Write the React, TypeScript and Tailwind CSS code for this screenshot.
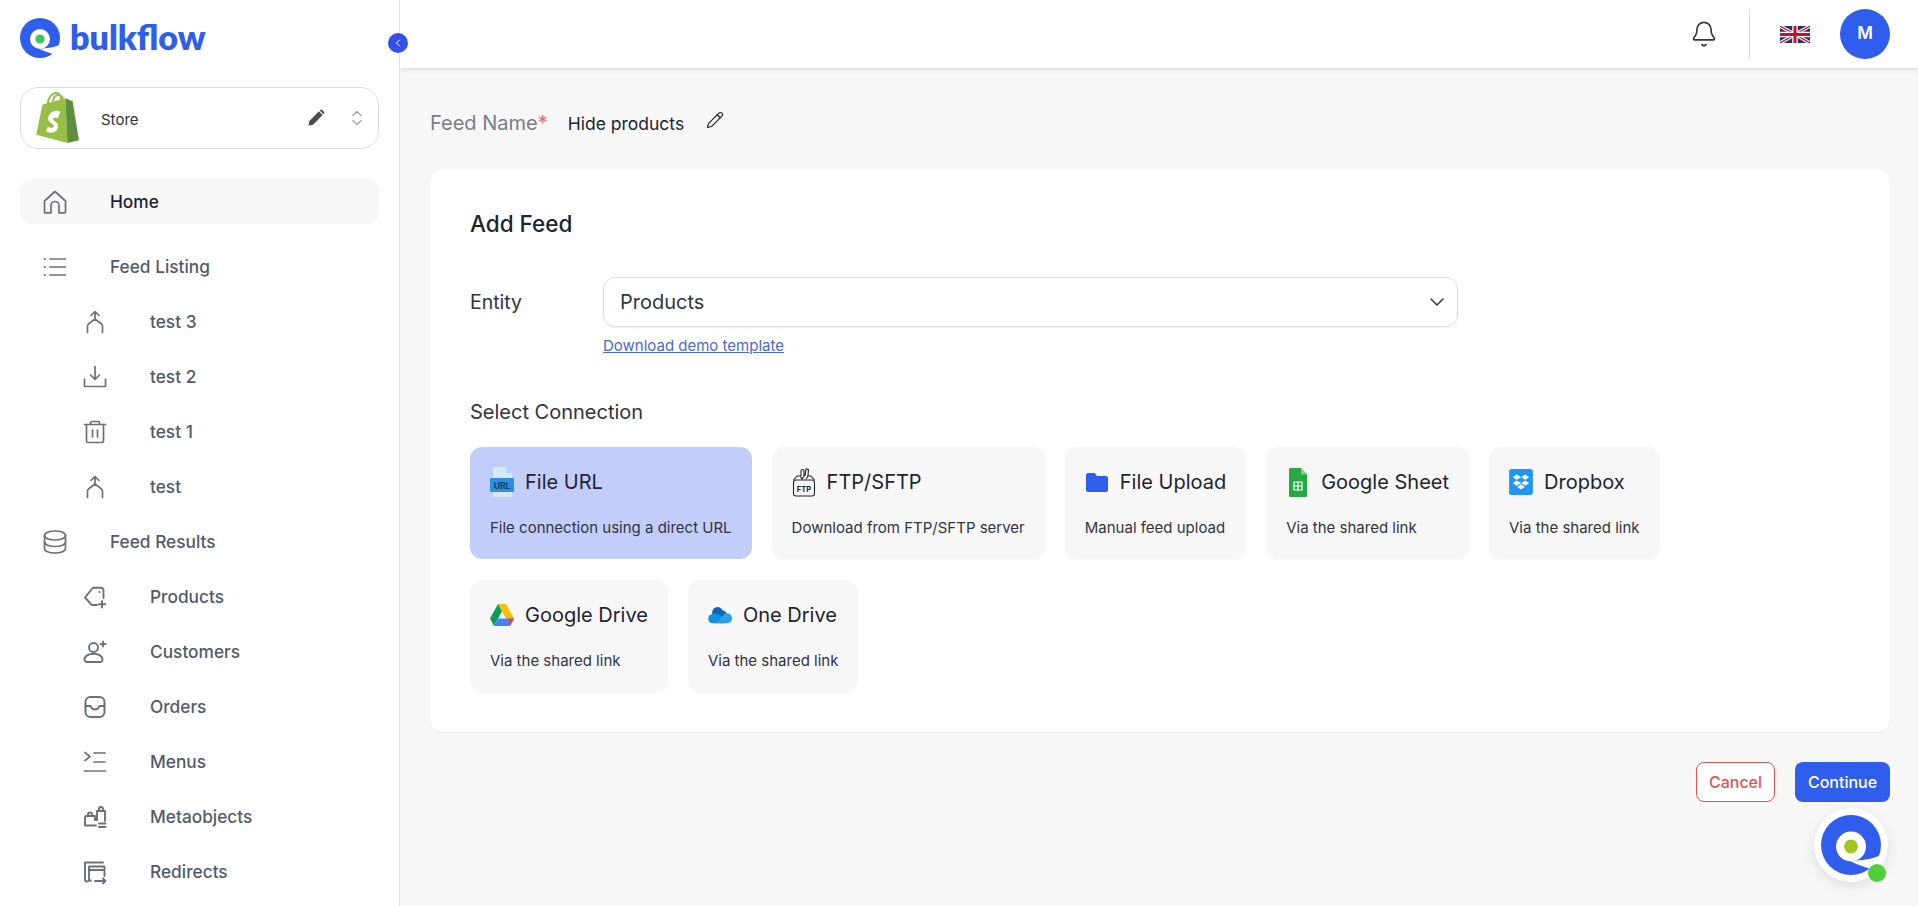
import React from 'react';
import { ChevronDown, ChevronLeft, ChevronsUpDown, Pencil, Bell } from 'lucide-react';

type IconProps = { className?: string };

const Stroke: React.FC<{ children: React.ReactNode; className?: string }> = ({ children, className }) => (
  <svg viewBox="0 0 24 24" fill="none" stroke="currentColor" strokeWidth={1.7} strokeLinecap="round" strokeLinejoin="round" className={className ?? 'w-6 h-6'}>
    {children}
  </svg>
);

const HomeIcon = () => (
  <Stroke><path d="M1.500 11 12 1.500 22.500 11v11a.8.8 0 0 1-.8.8h-5.700v-7.300a4 4 0 0 0-8 0v7.300H2.300a.8.8 0 0 1-.8-.8z" /></Stroke>
);
const ListIcon = () => (
  <Stroke>
    <path d="M7 4h15.500M7 12h15.500M7 20h15.500" />
    <path d="M1.800 4h.01M1.800 12h.01M1.800 20h.01" strokeWidth={2.200} />
  </Stroke>
);
const MergeUpIcon = () => (
  <Stroke>
    <path d="M12 9.500v-8M8 5.500l4-4 4 4" />
    <path d="M4.500 22.500v-6.500c0-1 .5-1.600 1.200-2.200L12 9l6.300 4.800c.7.600 1.200 1.200 1.200 2.200v6.500" />
  </Stroke>
);
const DownloadIcon = () => (
  <Stroke>
    <path d="M12 1.500v13M7.500 10l4.500 4.500 4.500-4.500" />
    <path d="M1.500 14v7.500h21V14" />
  </Stroke>
);
const TrashIcon = () => (
  <Stroke>
    <path d="M1.500 4.500h21M7.500 4.500V3A1.500 1.500 0 0 1 9 1.500h6A1.500 1.500 0 0 1 16.500 3v1.500" />
    <path d="M3.500 4.500V21A1.500 1.500 0 0 0 5 22.500h14a1.500 1.500 0 0 0 1.500-1.500V4.500" />
    <path d="M9.500 10v7M14.500 10v7" />
  </Stroke>
);
const DatabaseIcon = () => (
  <Stroke>
    <ellipse cx="12" cy="5.500" rx="10.500" ry="4.500" />
    <path d="M1.500 5.500v13c0 2.500 4.700 4.500 10.500 4.500s10.500-2 10.500-4.500v-13" />
    <path d="M1.500 12c0 2.500 4.700 4.500 10.500 4.500s10.500-2 10.500-4.500" />
  </Stroke>
);
const TagPlusIcon = () => (
  <Stroke>
    <path d="M14 20H9.500a2 2 0 0 1-1.400-.6L2 12.500 9.200 3.500c.4-.5 1-.8 1.600-.8h6.700c1.600 0 3 1.300 3 3V13" strokeWidth={1.900} />
    <path d="M16.500 7h.01" strokeWidth={2.200} />
    <path d="M19 16v6.500M15.800 19.200h6.500" strokeWidth={1.900} />
  </Stroke>
);
const UserPlusIcon = () => (
  <Stroke>
    <circle cx="10.500" cy="7.500" r="4.500" strokeWidth={1.900} />
    <path d="M1.500 19.500c0-3.500 4.200-5.700 9-5.700s9 2.200 9 5.700c0 1.400-1 2.500-2.500 2.500H4c-1.500 0-2.500-1.100-2.500-2.500z" strokeWidth={1.900} />
    <path d="M20 1.500v5M17.500 4h5" strokeWidth={1.900} />
  </Stroke>
);
const InboxIcon = () => (
  <Stroke>
    <rect x="2.500" y="2" width="19" height="20" rx="5" strokeWidth={2} />
    <path d="M2.500 11h5c.8 2.300 2.500 3.500 4.500 3.500s3.700-1.200 4.500-3.500h5" strokeWidth={2} />
  </Stroke>
);
const MenusIcon = () => (
  <Stroke>
    <path d="M2 2.500l5 4-5 4" />
    <path d="M11 3h11M11 12h11M1.500 21h21" />
  </Stroke>
);
const MetaIcon = () => (
  <Stroke>
    <path d="M2 20.500v-8A1.500 1.500 0 0 1 3.500 11H12v4h2M2 20.500h11" strokeWidth={1.900} />
    <path d="M5 11V9.500a2 2 0 0 1 4 0V11" strokeWidth={1.900} />
    <path d="M14 15V6h8v10M16 6V4a2 2 0 0 1 4 0v2" strokeWidth={1.900} />
    <path d="M16 18.500h6.500M16 22h6.500" strokeWidth={1.900} />
  </Stroke>
);
const RedirectIcon = () => (
  <Stroke>
    <path d="M5 21.500H4A2 2 0 0 1 2 19.500V2.500h18" strokeWidth={1.900} />
    <path d="M6 20V6.500h15.500V16M6 10h15.500" strokeWidth={1.900} />
    <path d="M6 20.500h2M12 21h10.500M20 18.500l2.500 2.500-2.500 2.500" strokeWidth={1.900} />
  </Stroke>
);

const LogoMark: React.FC<IconProps & { dot: string }> = ({ className, dot }) => (
  <svg viewBox="0 0 40 40" className={className}>
    <circle cx="20" cy="20" r="20" fill="#2f5eec" />
    <path d="M22 30.500 28 30C32 29.500 36 29 41 26V40L33 36C29 34.500 25 33.500 20 31Z" fill="#fff" />
    <circle cx="20" cy="21" r="10" fill="#fff" />
    <circle cx="20" cy="21" r="4.600" fill={dot} />
  </svg>
);

const ShopifyBag = () => (
  <svg viewBox="0 0 44 50" className="w-[48px] h-[52px]">
    <path d="M3 41 9 12l22-6 2 43z" fill="#95bf47" />
    <path d="M31 6l2 43 11-2.500L38 9z" fill="#5e8e3e" />
    <path d="M14 12c0-6 4-11 8-11s5 4 5 8M19 11c0-5 2-8 5-8M24 3c3 0 5 2 5 6" fill="none" stroke="#95bf47" strokeWidth="1.800" />
    <path d="M26 19c-1-.8-3-1-4.500-.8-4.500.6-7 4-7 7.300 0 4.500 5.500 4.800 5.500 7.300 0 1.500-2.500 2.500-6 .5L12.500 38c3.500 2 9.500 1.500 11.500-3.500 1.500-5-5-6.500-5-8.500 0-1 2-2 5-.8z" fill="#fff" />
  </svg>
);

const UkFlag = () => (
  <svg viewBox="0 0 60 34" className="w-[30px] h-[17px]">
    <rect width="60" height="34" fill="#27306f" />
    <path d="M0 0l60 34M60 0 0 34" stroke="#fff" strokeWidth="7" />
    <path d="M0 0l60 34M60 0 0 34" stroke="#c8102e" strokeWidth="2.500" />
    <path d="M30 0v34M0 17h60" stroke="#fff" strokeWidth="11" />
    <path d="M30 0v34M0 17h60" stroke="#c8102e" strokeWidth="6" />
  </svg>
);

const UrlIcon = () => (
  <svg viewBox="0 0 24 30" className="w-6 h-[30px]">
    <path d="M3 0h13l6 6v24H3z" fill="#d7e9f7" />
    <path d="M16 0l6 6h-6z" fill="#b5d5ee" />
    <rect x="0" y="11" width="24" height="14" rx="1" fill="#2b8fe0" />
    <text x="12" y="22" textAnchor="middle" fontSize="8.500" fontWeight="700" fill="#123a66" fontFamily="Inter, sans-serif">URL</text>
  </svg>
);
const FtpIcon = () => (
  <svg viewBox="0 0 24 30" className="w-6 h-[30px]" fill="none" stroke="#1f2430" strokeWidth="1.100">
    <rect x="1.500" y="13" width="21" height="16" rx="2.500" />
    <path d="M1.500 13 5 9h3l2 3 2-3M14 12l2-3h3l3.500 4" />
    <path d="M9 9V4a1.500 1.500 0 0 1 3 0v5M13 9l1-7 2.500.5L16 9" />
    <text x="12" y="25" textAnchor="middle" fontSize="7.500" fontWeight="700" fill="#1f2430" stroke="none" fontFamily="Inter, sans-serif">FTP</text>
  </svg>
);
const FolderIcon = () => (
  <svg viewBox="0 0 22 20" className="w-[22px] h-5">
    <path d="M2 1h6.500l2.500 3h9a2 2 0 0 1 2 2v12a2 2 0 0 1-2 2H2a2 2 0 0 1-2-2V3a2 2 0 0 1 2-2z" fill="#2f5eec" />
  </svg>
);
const SheetIcon = () => (
  <svg viewBox="0 0 18 29" className="w-[18px] h-[29px]">
    <path d="M1.500 0H12l6 6.500v21a1.500 1.500 0 0 1-1.500 1.500h-15A1.500 1.500 0 0 1 0 27.500v-26A1.500 1.500 0 0 1 1.500 0z" fill="#28a745" />
    <path d="M12 0l6 6.500h-6z" fill="#7fd08f" />
    <path d="M5 14h8v8H5zM5 18h8M9 14v8" fill="none" stroke="#fff" strokeWidth="1.200" />
  </svg>
);
const DropboxIcon = () => (
  <svg viewBox="0 0 22 24" className="w-6 h-[26px]">
    <rect width="22" height="24" rx="2.500" fill="#2196f3" />
    <path d="M7 5l4 2.500L7 10 3.500 7.500zM15 5l3.500 2.500L15 10l-4-2.500zM7 10.500l4 2.500-4 2.500-3.500-2.500zM15 10.500l3.500 2.500L15 15.500 11 13zM7.500 16.500l3.500-2.500 3.500 2.500L11 19z" fill="#fff" />
  </svg>
);
const DriveIcon = () => (
  <svg viewBox="0 0 24 22" className="w-6 h-[22px]">
    <path d="M8 0h8l8 14.500h-8z" fill="#fbbc04" />
    <path d="M8 0l4 7.300L4 22 0 14.500z" fill="#0f9d58" />
    <path d="M8 14.500h16L20 22H4z" fill="#4285f4" />
    <path d="M24 14.500h-6l2 7.500z" fill="#ea4335" />
  </svg>
);
const OneDriveIcon = () => (
  <svg viewBox="0 0 26 18" className="w-6 h-[18px]">
    <path d="M5 9a6 6 0 0 1 11-5 5 5 0 0 1 4 3l-8 7z" fill="#0f64b8" />
    <path d="M5 18a5 5 0 0 1-1-9.800A6 6 0 0 1 10 8l6 3 2 7z" fill="#1490df" />
    <path d="M20 7a5.500 5.500 0 0 1 1 11H8l8-8c1-2 2.500-3 4-3z" fill="#2aa0e8" />
  </svg>
);

const navItems: { label: string; icon: React.ReactNode; sub?: boolean; active?: boolean }[] = [
  { label: 'Home', icon: <HomeIcon />, active: true },
  { label: 'Feed Listing', icon: <ListIcon /> },
  { label: 'test 3', icon: <MergeUpIcon />, sub: true },
  { label: 'test 2', icon: <DownloadIcon />, sub: true },
  { label: 'test 1', icon: <TrashIcon />, sub: true },
  { label: 'test', icon: <MergeUpIcon />, sub: true },
  { label: 'Feed Results', icon: <DatabaseIcon /> },
  { label: 'Products', icon: <TagPlusIcon />, sub: true },
  { label: 'Customers', icon: <UserPlusIcon />, sub: true },
  { label: 'Orders', icon: <InboxIcon />, sub: true },
  { label: 'Menus', icon: <MenusIcon />, sub: true },
  { label: 'Metaobjects', icon: <MetaIcon />, sub: true },
  { label: 'Redirects', icon: <RedirectIcon />, sub: true },
];

const connections: { title: string; desc: string; icon: React.ReactNode; selected?: boolean }[] = [
  { title: 'File URL', desc: 'File connection using a direct URL', icon: <UrlIcon />, selected: true },
  { title: 'FTP/SFTP', desc: 'Download from FTP/SFTP server', icon: <FtpIcon /> },
  { title: 'File Upload', desc: 'Manual feed upload', icon: <FolderIcon /> },
  { title: 'Google Sheet', desc: 'Via the shared link', icon: <SheetIcon /> },
  { title: 'Dropbox', desc: 'Via the shared link', icon: <DropboxIcon /> },
  { title: 'Google Drive', desc: 'Via the shared link', icon: <DriveIcon /> },
  { title: 'One Drive', desc: 'Via the shared link', icon: <OneDriveIcon /> },
];

const Sidebar = () => (
  <aside className="relative w-[400px] shrink-0 h-full bg-white border-r border-[#dcdde0] px-5 overflow-hidden">
    <div className="flex items-center gap-[10px] h-[76px]">
      <LogoMark className="w-10 h-10" dot="#3ec85a" />
      <span className="mb-[3px] text-[34px] font-extrabold text-[#2f5eec] leading-none font-['Lato',sans-serif]">bulkflow</span>
    </div>
    <div className="mt-[11px] flex items-center h-[62px] w-[359px] border border-[#dcdde0] rounded-[18px] pl-[11px] pr-[11px]">
      <ShopifyBag />
      <span className="ml-[21px] mt-[5px] text-[15px] text-[#303540]">Store</span>
      <svg viewBox="0 0 24 24" className="ml-auto w-[20px] h-[20px]" fill="#4a4d52">
        <path d="M3 21l1-5.500L15.500 4l4.500 4.500L8.500 20zM17 2.500a1.800 1.800 0 0 1 2.500 0l2 2a1.800 1.800 0 0 1 0 2.500L21 7.500 16.500 3z" />
      </svg>
      <ChevronsUpDown className="ml-[21px] w-[20px] h-[20px] text-[#9b9ea5]" strokeWidth={1.5} />
    </div>
    <nav className="mt-[30px] flex flex-col gap-[10px]">
      {navItems.map(item => (
        <div
          key={item.label}
          className={`flex items-center h-[45px] rounded-xl text-[17.300px] font-medium ${item.active ? 'bg-[#f7f7f8] text-[#1f2430] mb-[10px]' : 'text-[#525a6b]'} ${item.sub ? 'pl-[63px]' : 'pl-[23px]'}`}
        >
          <span className="w-6 flex justify-center text-[#6b7080]">{item.icon}</span>
          <span className="ml-[43px]">{item.label}</span>
        </div>
      ))}
    </nav>
  </aside>
);

const Header = () => (
  <header className="h-[68px] shrink-0 bg-white shadow-[0_2px_4px_rgba(0,0,0,0.1)] flex items-center justify-end pr-[28px]">
    <Bell className="w-7 h-7 text-[#303540] mr-[31px]" strokeWidth={1.4} />
    <div className="w-px h-[50px] bg-[#dcdde0] mr-[30px]" />
    <UkFlag />
    <div className="ml-[30px] w-[50px] h-[50px] rounded-full bg-[#2f5eec] text-white font-semibold text-[17px] flex items-center justify-center">M</div>
  </header>
);

const App: React.FC = () => (
  <div className="relative flex h-[906px] w-full overflow-hidden bg-[#f7f7f8] font-['Inter',sans-serif]">
    <Sidebar />
    <button className="absolute left-[388px] top-[33px] z-10 w-5 h-5 rounded-full bg-[#3350ea] text-white flex items-center justify-center">
      <ChevronLeft className="w-3 h-3" strokeWidth={2} />
    </button>
    <div className="flex-1 min-w-0 flex flex-col">
      <Header />
      <main className="flex-1 pl-[30px] pr-[28px]">
        <div className="h-[102px] pt-[43px] flex items-start">
          <span className="text-[20px] leading-6 text-[#7a7d85]">Feed Name<span className="text-[#f06a6a]">*</span></span>
          <span className="ml-[20px] mt-[1px] text-[17.500px] leading-6 text-[#1f2430]">Hide products</span>
          <Pencil className="ml-[22px] w-[18px] h-[18px] text-[#1f2430]" strokeWidth={1.6} />
        </div>
        <section className="bg-white rounded-xl h-[562px] px-10 pt-10 shadow-[0_1px_2px_rgba(0,0,0,0.05)]">
          <h2 className="text-[22.500px] leading-7 font-medium text-[#1f2430]">Add Feed</h2>
          <div className="mt-[39px] flex items-start">
            <label className="w-[133px] h-[50px] pt-[1px] flex items-center text-[19.500px] text-[#303540]">Entity</label>
            <div>
              <div className="w-[855px] h-[50px] border border-[#dcdde0] rounded-xl flex items-center justify-between pl-4 pr-[8px] text-[20px] text-[#303540] shadow-[0_1px_2px_rgba(0,0,0,0.06)]">
                Products
                <ChevronDown className="w-6 h-6 text-[#303540]" strokeWidth={1.5} />
              </div>
              <a className="block mt-[9px] text-[15px] leading-5 underline text-[#4a69d9]">Download demo template</a>
            </div>
          </div>
          <h3 className="mt-[42px] text-[20px] leading-7 text-[#303540]">Select Connection</h3>
          <div className="mt-[21px] flex flex-wrap gap-x-5 gap-y-[21px] w-[1250px]">
            {connections.map(c => (
              <div key={c.title} className={`h-[112px] rounded-xl px-5 pt-5 ${c.selected ? 'bg-[#c2cdf9]' : 'bg-[#f7f7f8] shadow-[0_1px_2px_rgba(0,0,0,0.03)]'}`}>
                <div className="flex items-center gap-[11px] h-[30px]">
                  <span className="w-6 flex justify-center">{c.icon}</span>
                  <span className="text-[20px] text-[#1f2430]">{c.title}</span>
                </div>
                <p className="mt-[21px] text-[15px] leading-5 text-[#303540] whitespace-nowrap">{c.desc}</p>
              </div>
            ))}
          </div>
        </section>
        <div className="mt-[30px] flex justify-end gap-5">
          <button className="w-[79px] h-10 rounded-lg border border-[#e2544f] text-[#e2544f] text-[16px] font-medium bg-white">Cancel</button>
          <button className="w-[95px] h-10 rounded-lg bg-[#2f5eec] text-white text-[16px] font-medium">Continue</button>
        </div>
      </main>
    </div>
    <div className="absolute left-[1814px] top-[808px] w-[74px] h-[74px] rounded-full bg-white shadow-[0_4px_14px_rgba(0,0,0,0.1)] flex items-center justify-center">
      <LogoMark className="w-[60px] h-[60px]" dot="#a4c61e" />
      <span className="absolute right-[2px] bottom-0 w-[18px] h-[18px] rounded-full bg-[#4fcf3a]" />
    </div>
  </div>
);

export default App;
